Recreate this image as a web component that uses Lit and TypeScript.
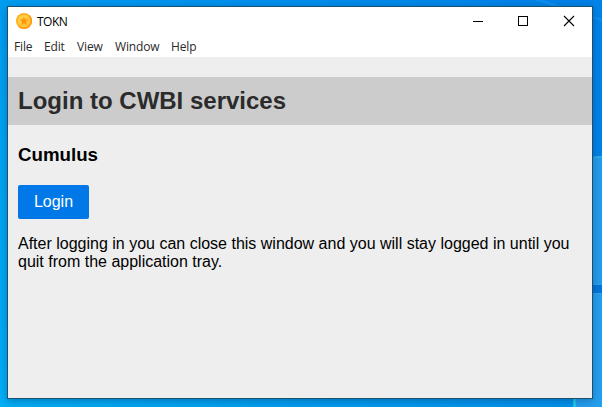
import { LitElement, html, css, svg } from "lit";
import { customElement } from "lit/decorators.js";

@customElement("desktop-wallpaper")
class DesktopWallpaper extends LitElement {
  static styles = css`
    :host { display: block; width: 602px; height: 407px; }
    svg { display: block; }
  `;
  render() {
    return html`<svg width="602" height="407" viewBox="0 0 602 407" aria-hidden="true">
      <defs>
        <linearGradient id="top"><stop offset="0" stop-color="#009df0"/><stop offset=".5" stop-color="#008eed"/><stop offset="1" stop-color="#0080e6"/></linearGradient>
        <linearGradient id="left" x1="0" y1="0" x2="0" y2="1"><stop offset="0" stop-color="#009df0"/><stop offset="1" stop-color="#00aef6"/></linearGradient>
        <linearGradient id="bottom"><stop offset="0" stop-color="#00aef6"/><stop offset=".5" stop-color="#009df0"/><stop offset="1" stop-color="#0090ea"/></linearGradient>
        <linearGradient id="right" x1="0" y1="0" x2="0" y2="1"><stop offset="0" stop-color="#0084e8"/><stop offset="1" stop-color="#007fe4"/></linearGradient>
      </defs>
      <rect width="602" height="407" fill="url(#top)"/>
      <rect width="12" height="407" fill="url(#left)"/>
      <rect y="390" width="602" height="17" fill="url(#bottom)"/>
      <rect x="590" width="12" height="407" fill="url(#right)"/>
      <path d="M535 -1L602 20" stroke="#1c98f2" stroke-opacity=".55" stroke-width="2.500" fill="none"/>
      <path d="M590 157.500L602 156V285H590Z" fill="#249dea"/>
      <path d="M590 157.800L602 156.800" stroke="#2cacea" stroke-width="2"/>
      <path d="M590 285H602V293H590Z" fill="#0076dc"/>
      <path d="M576 293H602V407H576Z" fill="#249fee"/>
      <path d="M590 284H602M590 293.500H602" stroke="#31a0ec"/>
      <path d="M574.500 396V407" stroke="#24d6ea" stroke-width="2.500"/>
    </svg>`;
  }
}

@customElement("title-bar")
class TitleBar extends LitElement {
  static styles = css`
    :host { display: flex; height: 29px; align-items: center; background: #fff; }
    .coin { display: block; margin: 0 0 1px 8px; }
    .name { margin-left: 5px; font: 12px/16px "Open Sans", "Noto Sans", sans-serif; letter-spacing: -0.5px; color: #000; flex: 1; }
    .controls { display: flex; }
    .control { display: grid; place-items: center; box-sizing: border-box; width: 46px; height: 29px; padding-bottom: 1px; }
    svg { display: block; overflow: visible; }
  `;
  private control(shape: unknown) {
    return html`<span class="control"><svg width="10" height="10" viewBox="0 0 10 10" fill="none" stroke="#000">${shape}</svg></span>`;
  }
  render() {
    return html`
      <svg class="coin" width="16" height="16" viewBox="0 0 16 16">
        <circle cx="8" cy="8" r="8" fill="#ffac20"/>
        <path d="M13.700 2.300A8 8 0 0 1 2.300 13.700Z" fill="#ff9812"/>
        <circle cx="8" cy="8" r="6.300" fill="#ffd044"/>
        <path d="M12.450 3.550A6.300 6.300 0 0 1 3.550 12.450Z" fill="#ffc236"/>
        <path d="M8 3.400L9.200 6.300L12.400 6.500L9.950 8.550L10.800 11.800L8 10.050L5.200 11.800L6.050 8.550L3.600 6.500L6.800 6.300Z" fill="#ff9410"/>
      </svg>
      <span class="name">TOKN</span>
      <span class="controls">
        ${this.control(svg`<path d="M1 5.500H11"/>`)}
        ${this.control(svg`<rect x=".5" y=".5" width="9" height="9" shape-rendering="crispEdges"/>`)}
        ${this.control(svg`<path d="M0 0L10 10M10 0L0 10" stroke-width="1.100"/>`)}
      </span>`;
  }
}

@customElement("app-root")
class AppRoot extends LitElement {
  static styles = css`
    :host { display: grid; width: 602px; height: 407px; overflow: hidden; font-family: "Liberation Sans", Arial, sans-serif; }
    desktop-wallpaper, .window { grid-area: 1 / 1; }
    .window { z-index: 1; box-sizing: border-box; width: 586px; height: 393px; margin: 6px 0 0 7px; border: 1px solid #1b506e; background: #eee; box-shadow: 0 2px 8px rgba(0, 20, 60, .3); }
    .menu { display: grid; grid-template-columns: 30px 33px 38px 56px 40px; height: 21px; padding-left: 6px; background: #fff; font: 12px/21px "Open Sans", "Noto Sans", sans-serif; letter-spacing: -0.15px; color: #2a2a2a; }
    .heading { margin: 20px 0 0; padding: 0 10px; height: 48px; background: #ccc; color: #2b2b2b; font-size: 24px; font-weight: 700; line-height: 48px; }
    .content { padding: 0 10px; color: #000; }
    .service { margin: 18px 0 19px; font-size: 18.720px; line-height: 23px; font-weight: 700; }
    .login { display: block; width: 71px; height: 34px; padding: 0; border: 0; border-radius: 2px; background: #0078e7; color: #fff; font: 16px/34px "Liberation Sans", Arial, sans-serif; }
    .note { margin: 16px 0 0; font-size: 16px; line-height: 18px; }
  `;
  render() {
    return html`
      <desktop-wallpaper></desktop-wallpaper>
      <main class="window">
        <title-bar></title-bar>
        <nav class="menu">${["File", "Edit", "View", "Window", "Help"].map((label) => html`<span>${label}</span>`)}</nav>
        <h1 class="heading">Login to CWBI services</h1>
        <section class="content">
          <h3 class="service">Cumulus</h3>
          <button class="login">Login</button>
          <p class="note">After logging in you can close this window and you will stay logged in until you quit from the application tray.</p>
        </section>
      </main>`;
  }
}
